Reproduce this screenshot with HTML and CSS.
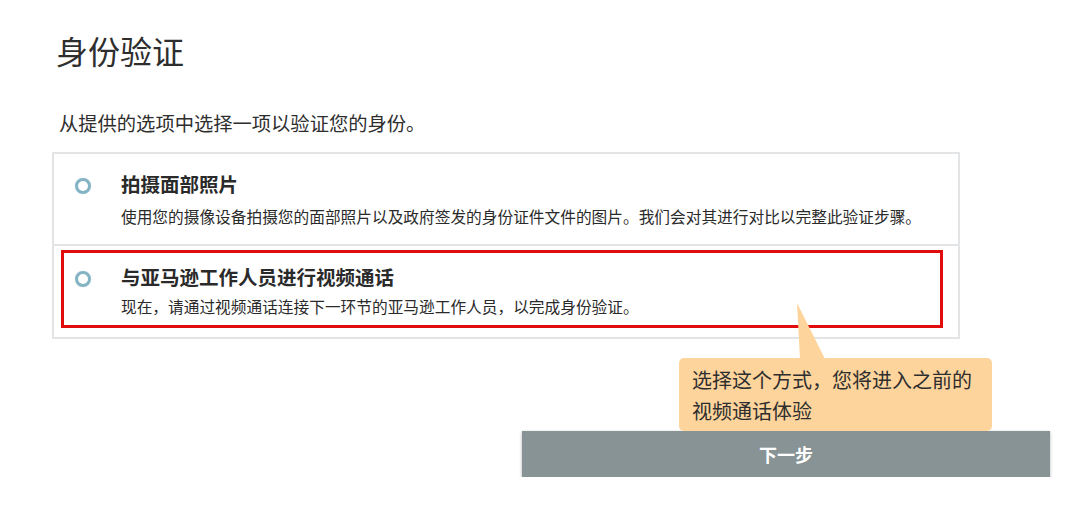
FILE: index.html
```html
<!DOCTYPE html>
<html lang="zh-CN">
<head>
<meta charset="utf-8">
<title>身份验证</title>
<link rel="stylesheet" href="styles.css">
</head>
<body>
<main class="page">
  <h1 class="title">身份验证</h1>
  <p class="lead">从提供的选项中选择一项以验证您的身份。</p>
  <div class="options">
    <div class="option">
      <span class="radio"></span>
      <div class="option-text">
        <div class="option-title">拍摄面部照片</div>
        <div class="option-desc">使用您的摄像设备拍摄您的面部照片以及政府签发的身份证件文件的图片。我们会对其进行对比以完整此验证步骤。</div>
      </div>
    </div>
    <div class="option option-marked">
      <span class="radio"></span>
      <div class="option-text">
        <div class="option-title">与亚马逊工作人员进行视频通话</div>
        <div class="option-desc">现在，请通过视频通话连接下一环节的亚马逊工作人员，以完成身份验证。</div>
      </div>
      <span class="highlight"></span>
    </div>
  </div>
  <div class="actions">
    <div class="next-wrap">
      <div class="tooltip">选择这个方式，您将进入之前的<br>视频通话体验</div>
      <button class="next" type="button">下一步</button>
    </div>
  </div>
</main>
</body>
</html>
```
FILE: styles.css
```css
* { box-sizing: border-box; }
html, body { margin: 0; padding: 0; background: #fff; }
body {
  font-family: "Noto Sans CJK SC", "Noto Sans", "Liberation Sans", sans-serif;
  color: #2b2b2b;
}
.page {
  padding: 30px 30px 0 52px;
}
.title {
  margin: 0 0 0 4px;
  font-size: 32px;
  line-height: 40px;
  font-weight: 400;
  color: #2e2e2e;
}
.lead {
  margin: 40px 0 0 7px;
  font-size: 19.3px;
  line-height: 26px;
  color: #2e2e2e;
}
.options {
  margin-top: 16px;
  width: 908px;
  border: 2px solid #e3e4e5;
}
.option {
  position: relative;
  display: flex;
  align-items: flex-start;
  padding: 18px 0 16px 21px;
}
.option + .option {
  border-top: 2px solid #e3e4e5;
  padding-top: 19px;
  padding-bottom: 19px;
}
.radio {
  flex: none;
  width: 16px;
  height: 16px;
  margin-top: 6px;
  border: 3px solid #84b3c4;
  border-radius: 50%;
  box-shadow: 0 0 1px #a9cad6;
}
.option-text {
  margin-left: 30px;
}
.option-title {
  font-size: 19.5px;
  line-height: 24px;
  font-weight: 700;
  color: #2a2a2a;
}
.option-desc {
  margin-top: 10px;
  font-size: 15.7px;
  line-height: 22px;
  color: #2a2a2a;
}
.option + .option .option-desc {
  margin-top: 7px;
}
.highlight {
  position: absolute;
  left: 7px;
  top: 4px;
  right: 15px;
  bottom: 9px;
  border: 3px solid #e10c0c;
  pointer-events: none;
}
.actions {
  display: flex;
  justify-content: flex-end;
  margin-top: 92px;
}
.next-wrap {
  position: relative;
  width: 528px;
}
.next {
  display: block;
  width: 100%;
  height: 46px;
  border: none;
  background: #889395;
  color: #fff;
  font-family: inherit;
  font-size: 18px;
  font-weight: 700;
  box-shadow: 0 1px 3px rgba(0, 0, 0, 0.3);
}
.tooltip {
  position: absolute;
  left: 157px;
  bottom: 100%;
  width: 313px;
  height: 73px;
  padding: 6px 0 0 13px;
  background: #fdd49c;
  border-radius: 5px;
  font-size: 20px;
  line-height: 31px;
  color: #2e2e2e;
  z-index: 1;
}
.tooltip::before {
  content: "";
  position: absolute;
  left: 118px;
  top: -55px;
  width: 28px;
  height: 56px;
  background: #fdd49c;
  clip-path: polygon(0 0, 3px 100%, 28px 100%);
}
```
